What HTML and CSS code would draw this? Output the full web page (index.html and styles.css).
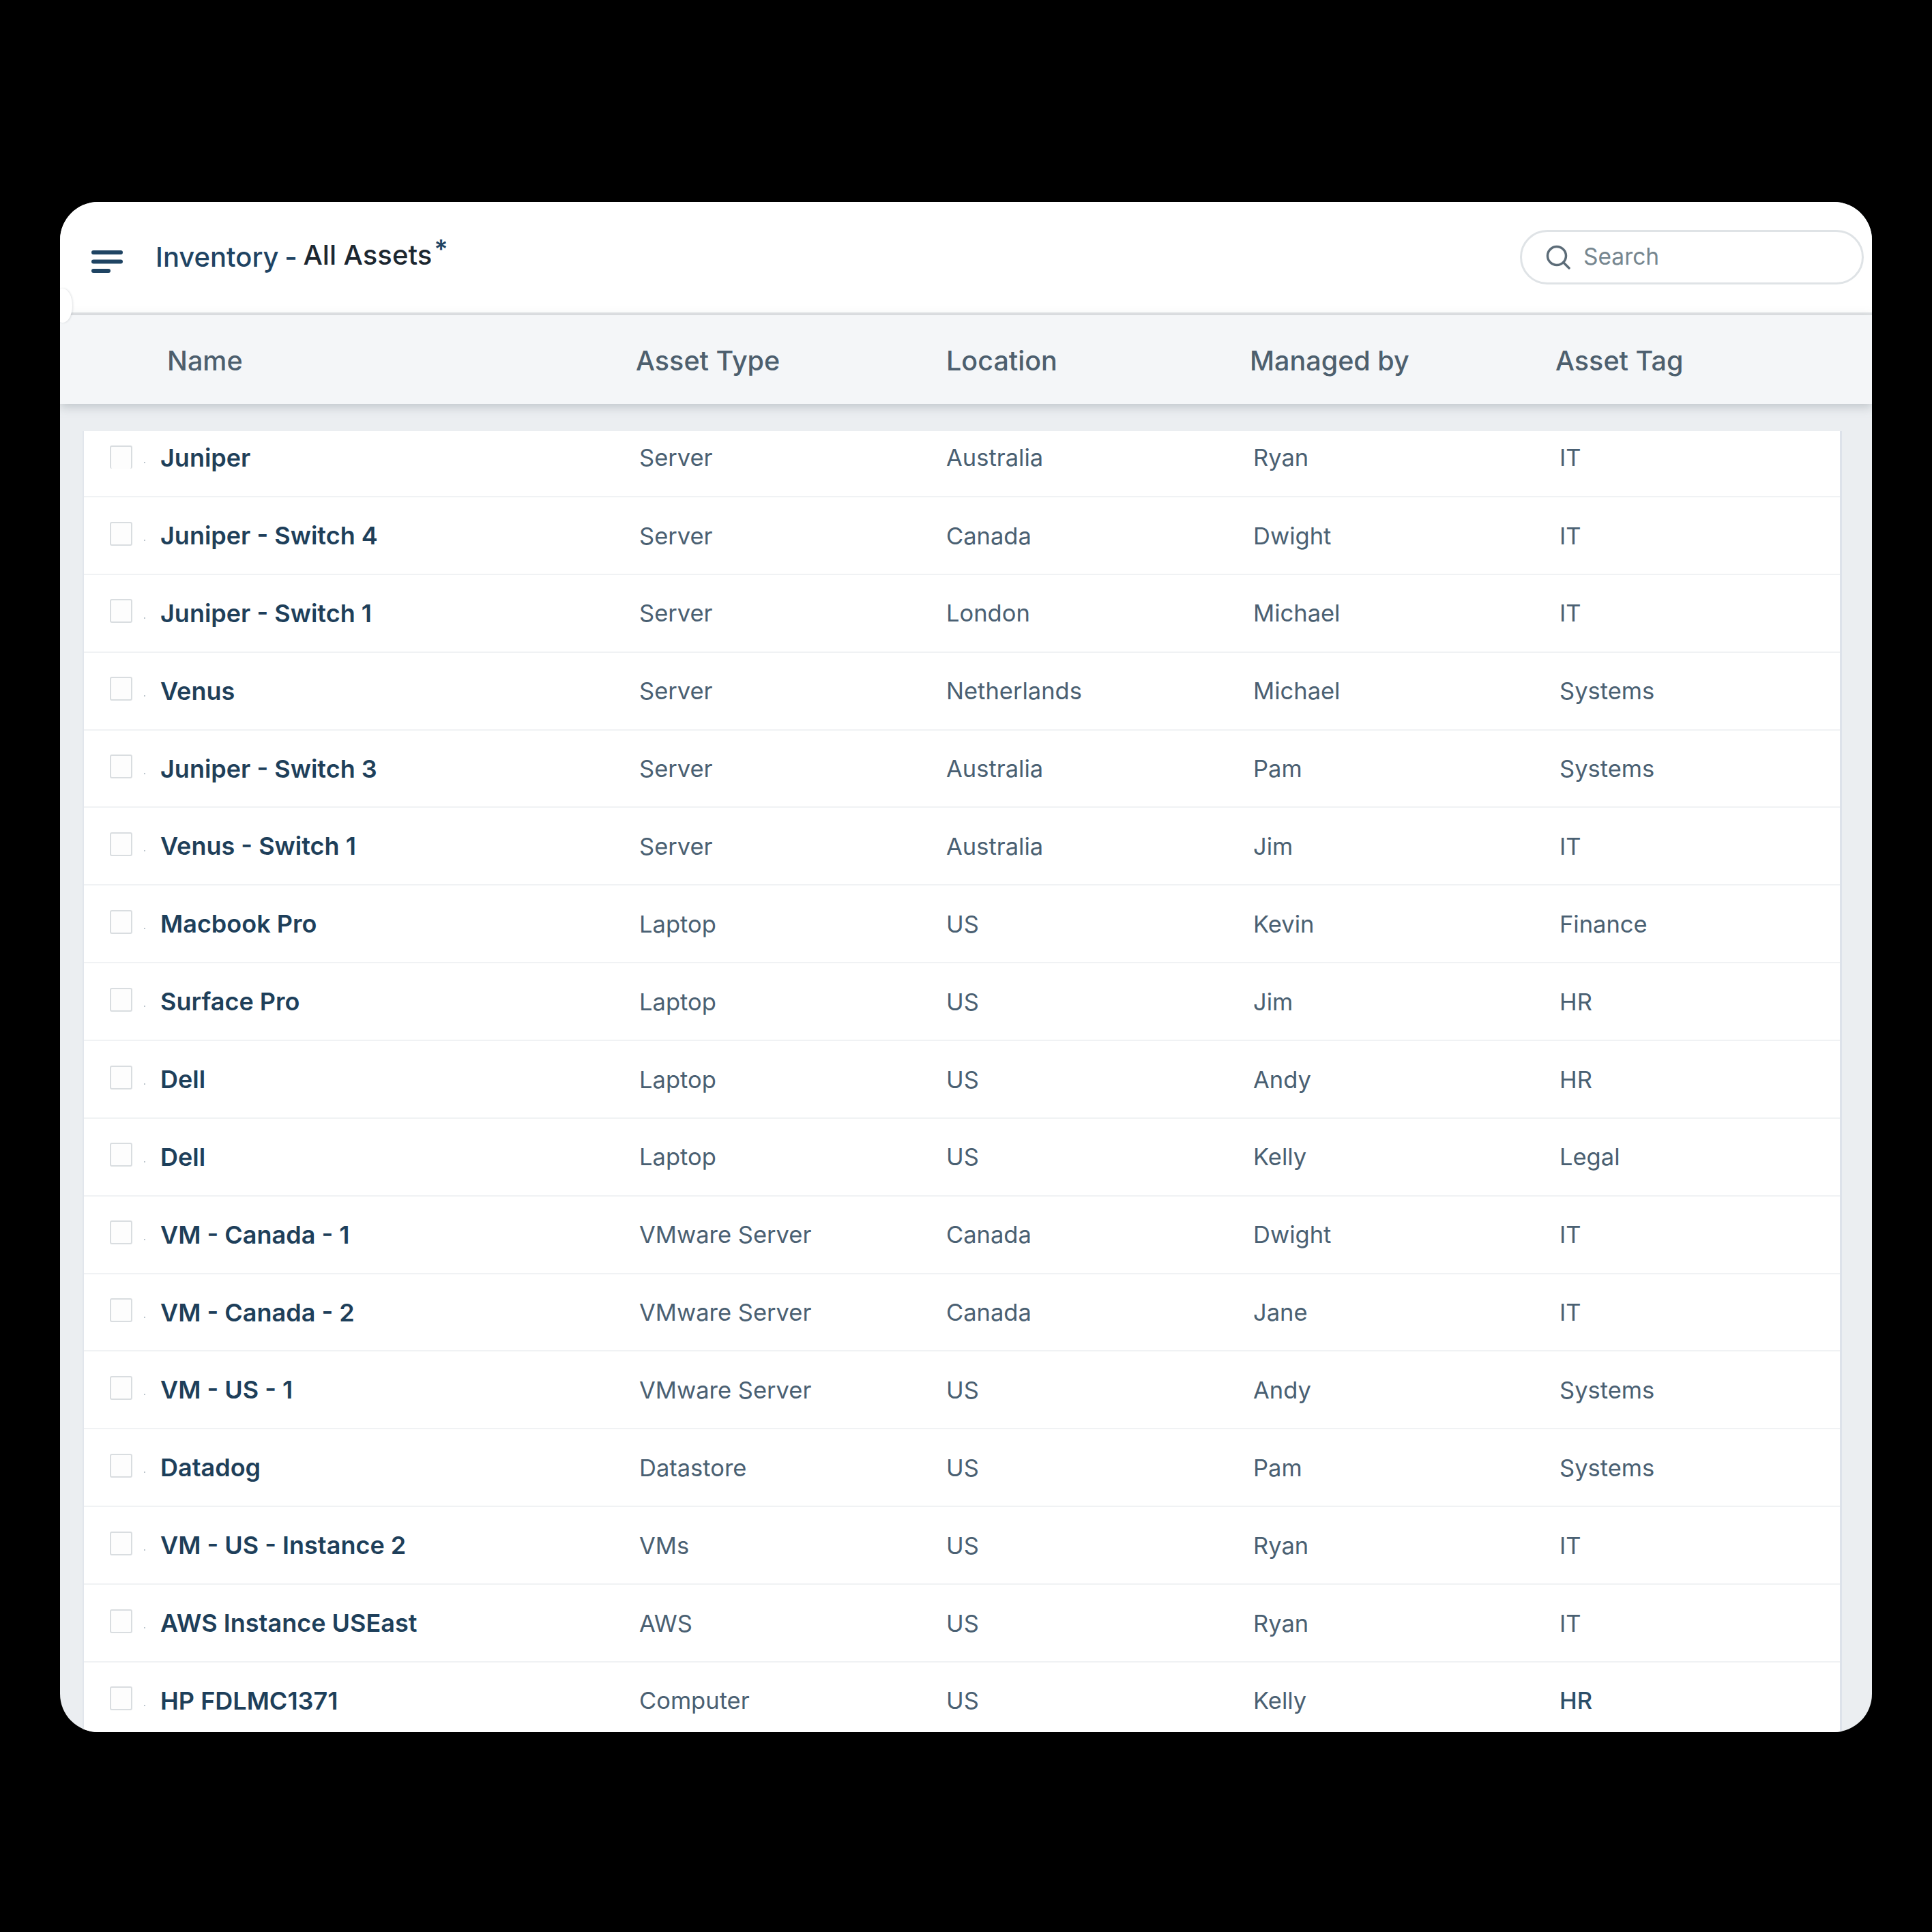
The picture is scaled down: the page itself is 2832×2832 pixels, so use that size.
FILE: index.html
```html
<!DOCTYPE html>
<html lang="en">
<head>
<meta charset="utf-8">
<title>Inventory - All Assets</title>
<link rel="stylesheet" href="styles.css">
</head>
<body>
<main class="card">
  <span class="notch"></span>
  <header class="topbar">
    <svg class="menu" width="46" height="34" viewBox="0 0 46 34"><path d="M3 4H43M3 17.500H43M3 31H25" fill="none" stroke="#1f4463" stroke-width="6" stroke-linecap="round"/></svg>
    <h1 class="title">Inventory - <span class="title-strong">All Assets</span><sup class="star">*</sup></h1>
    <div class="search">
      <svg class="search-icon" width="36" height="36" viewBox="0 0 36 36"><circle cx="16" cy="16" r="13.500" fill="none" stroke="#5c6c78" stroke-width="3.500"/><path d="M26 26L34 34" stroke="#5c6c78" stroke-width="3.500" stroke-linecap="round"/></svg>
      <span class="search-text">Search</span>
    </div>
  </header>
  <div class="columns">
    <span>Name</span><span>Asset Type</span><span>Location</span><span>Managed by</span><span>Asset Tag</span>
  </div>
  <div class="body">
    <div class="list">
      <div class="row first"><div class="sel"><i class="box"></i><i class="dot"></i></div><b>Juniper</b><span>Server</span><span>Australia</span><span>Ryan</span><span>IT</span></div>
      <div class="row"><div class="sel"><i class="box"></i><i class="dot"></i></div><b>Juniper - Switch 4</b><span>Server</span><span>Canada</span><span>Dwight</span><span>IT</span></div>
      <div class="row"><div class="sel"><i class="box"></i><i class="dot"></i></div><b>Juniper - Switch 1</b><span>Server</span><span>London</span><span>Michael</span><span>IT</span></div>
      <div class="row"><div class="sel"><i class="box"></i><i class="dot"></i></div><b>Venus</b><span>Server</span><span>Netherlands</span><span>Michael</span><span>Systems</span></div>
      <div class="row"><div class="sel"><i class="box"></i><i class="dot"></i></div><b>Juniper - Switch 3</b><span>Server</span><span>Australia</span><span>Pam</span><span>Systems</span></div>
      <div class="row"><div class="sel"><i class="box"></i><i class="dot"></i></div><b>Venus - Switch 1</b><span>Server</span><span>Australia</span><span>Jim</span><span>IT</span></div>
      <div class="row"><div class="sel"><i class="box"></i><i class="dot"></i></div><b>Macbook Pro</b><span>Laptop</span><span>US</span><span>Kevin</span><span>Finance</span></div>
      <div class="row"><div class="sel"><i class="box"></i><i class="dot"></i></div><b>Surface Pro</b><span>Laptop</span><span>US</span><span>Jim</span><span>HR</span></div>
      <div class="row"><div class="sel"><i class="box"></i><i class="dot"></i></div><b>Dell</b><span>Laptop</span><span>US</span><span>Andy</span><span>HR</span></div>
      <div class="row"><div class="sel"><i class="box"></i><i class="dot"></i></div><b>Dell</b><span>Laptop</span><span>US</span><span>Kelly</span><span>Legal</span></div>
      <div class="row"><div class="sel"><i class="box"></i><i class="dot"></i></div><b>VM - Canada - 1</b><span>VMware Server</span><span>Canada</span><span>Dwight</span><span>IT</span></div>
      <div class="row"><div class="sel"><i class="box"></i><i class="dot"></i></div><b>VM - Canada - 2</b><span>VMware Server</span><span>Canada</span><span>Jane</span><span>IT</span></div>
      <div class="row"><div class="sel"><i class="box"></i><i class="dot"></i></div><b>VM - US - 1</b><span>VMware Server</span><span>US</span><span>Andy</span><span>Systems</span></div>
      <div class="row"><div class="sel"><i class="box"></i><i class="dot"></i></div><b>Datadog</b><span>Datastore</span><span>US</span><span>Pam</span><span>Systems</span></div>
      <div class="row"><div class="sel"><i class="box"></i><i class="dot"></i></div><b>VM - US - Instance 2</b><span>VMs</span><span>US</span><span>Ryan</span><span>IT</span></div>
      <div class="row"><div class="sel"><i class="box"></i><i class="dot"></i></div><b>AWS Instance USEast</b><span>AWS</span><span>US</span><span>Ryan</span><span>IT</span></div>
      <div class="row"><div class="sel"><i class="box"></i><i class="dot"></i></div><b>HP FDLMC1371</b><span>Computer</span><span>US</span><span>Kelly</span><span class="strong-tag">HR</span></div>
    </div>
  </div>
</main>
</body>
</html>
```
FILE: styles.css
```css
* { box-sizing: border-box; }
html, body { margin: 0; background: #000; }
body {
  width: 2832px;
  height: 2832px;
  padding: 296px 88px 293px;
  font-family: Inter, Roboto, "Liberation Sans", sans-serif;
}
.card {
  position: relative;
  height: 2243px;
  border-radius: 56px;
  background: #ebeef1;
  overflow: hidden;
  display: flex;
  flex-direction: column;
}
.notch {
  position: absolute;
  left: -10px;
  top: 127px;
  width: 28px;
  height: 50px;
  border-radius: 50%;
  background: #fff;
  box-shadow: 1px 0 3px rgba(90, 100, 110, .2);
  z-index: 2;
}
.topbar {
  height: 166px;
  flex: none;
  background: #fff;
  border-bottom: 4px solid #e3e6e8;
  display: flex;
  align-items: center;
  padding-left: 46px;
  padding-right: 12px;
}
.menu { flex: none; margin-top: 12px; }
.title {
  margin: 0 0 4px 48px;
  font-size: 40px;
  font-weight: 500;
  word-spacing: -2px;
  color: #1f4463;
  white-space: nowrap;
}
.title-strong {
  display: inline-block;
  vertical-align: 3px;
  color: #1c2730;
  font-weight: 500;
  word-spacing: 0;
}
.star {
  font-size: 38px;
  font-weight: 600;
  line-height: 0;
  color: #1f4463;
  vertical-align: 12px;
  margin-left: 3px;
}
.search {
  margin-left: auto;
  width: 504px;
  height: 80px;
  border: 3px solid #dfe3e6;
  border-radius: 40px;
  display: flex;
  align-items: center;
  padding-left: 35px;
  gap: 19px;
}
.search-text { font-size: 33.500px; color: #76868f; margin-bottom: 2px; }
.columns {
  flex: none;
  height: 130px;
  padding-top: 4px;
  background: #f4f6f8;
  display: grid;
  grid-template-columns: 844px 455px 445px 448px 1fr;
  align-items: center;
  font-size: 39.500px;
  font-weight: 500;
  color: #4d5f6e;
  box-shadow: 0 4px 14px rgba(120, 130, 138, .4);
  position: relative;
}
.columns span:first-child { margin-left: 157px; }
.body {
  flex: 1;
  min-height: 0;
  padding: 40px 44px 0 33px;
}
.list {
  height: 100%;
  background: #fff;
  border-left: 2px solid #e2e6ec;
  border-right: 3px solid #dde2ea;
  overflow: hidden;
}
.row {
  height: 113.870px;
  display: grid;
  grid-template-columns: 112px 702px 450px 450px 449px 1fr;
  grid-template-rows: 112px;
  align-items: center;
  border-bottom: 2px solid #f0f2f4;
  font-size: 34.500px;
  color: #4a6072;
  white-space: nowrap;
}
.row.first { height: 97px; grid-template-rows: 95px; align-items: end; }
.row.first > * { height: 112px; line-height: 112px; }
.row.first .box { height: 34px; margin-bottom: 2px; border-bottom: 0; }
.row b {
  font-size: 36px;
  font-weight: 600;
  color: #1e3f5a;
}
.strong-tag { font-weight: 500; color: #2d4e68; }
.sel {
  display: flex;
  align-items: center;
  padding-left: 38px;
  gap: 17px;
}
.box {
  width: 33px;
  height: 35px;
  margin-bottom: 6px;
  border: 2px solid #d9dde0;
  border-radius: 3px;
  background: #fdfdfd;
}
.dot {
  width: 2px;
  height: 2px;
  margin-top: 14px;
  background: #bcc5cc;
}
```
